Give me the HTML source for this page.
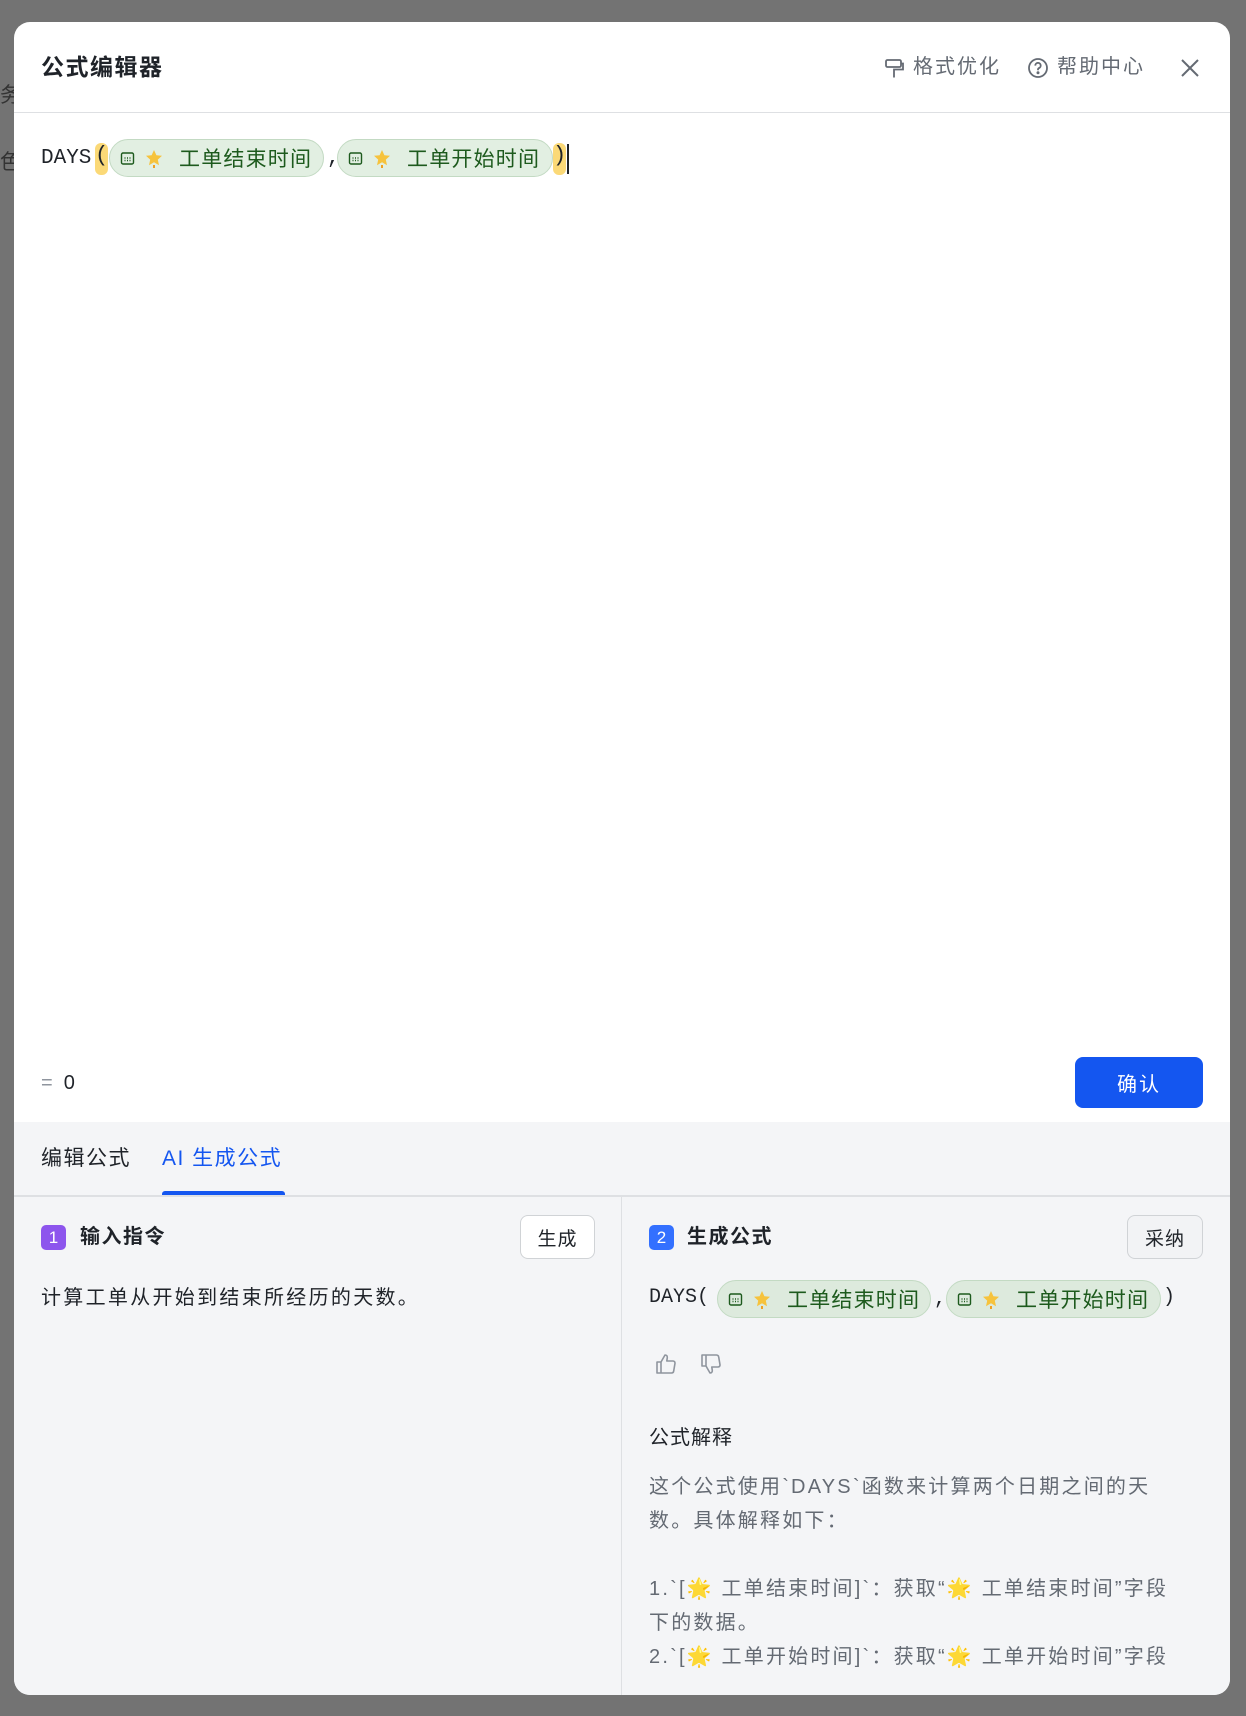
<!DOCTYPE html>
<html><head><meta charset="utf-8"><style>
*{box-sizing:border-box;margin:0;padding:0}
body{width:1246px;height:1716px;background:#737373;position:relative;overflow:hidden;font-family:"Liberation Sans","Noto Sans CJK SC",sans-serif;color:#1f2329}
.abs{position:absolute}
.modal{left:14px;top:22px;width:1216px;height:1673px;background:#fff;border-radius:16px;overflow:hidden}
.t{white-space:nowrap;line-height:1}
.chip{position:absolute;height:38px;border-radius:19px;background:#e2efe2;border:1px solid #c3dac3;color:#1d5a1d;font-size:21px;letter-spacing:1.2px;display:flex;align-items:center;white-space:nowrap}
.mono{font-family:"Liberation Mono","DejaVu Sans Mono",monospace}
.btn{position:absolute;border:1px solid #d0d3d6;border-radius:8px;font-size:19px;display:flex;align-items:center;justify-content:center;letter-spacing:1px}
.badge{position:absolute;width:25px;height:25px;border-radius:5px;color:#fff;font-size:17px;display:flex;align-items:center;justify-content:center}
.p{color:#646a73;font-size:20px;letter-spacing:2.2px;line-height:34px;white-space:nowrap}
</style></head><body>
<div class="abs t" style="left:0;top:85px;font-size:21px;color:#333">务</div>
<div class="abs t" style="left:0;top:152px;font-size:21px;color:#333">色</div>
<div class="abs modal">
  <div class="abs t" style="left:27px;top:34px;font-size:23px;font-weight:bold;letter-spacing:1.5px">公式编辑器</div>
  <svg class="abs" style="left:870px;top:35px" width="22" height="24" viewBox="0 0 22 24" fill="none" stroke="#646a73" stroke-width="1.8"><rect x="2" y="3" width="15" height="7" rx="1.5"/><path d="M17 6.5h2v6H10v8"/></svg>
  <div class="abs t" style="left:899px;top:35px;font-size:20px;color:#646a73;letter-spacing:2px">格式优化</div>
  <svg class="abs" style="left:1013px;top:35px" width="22" height="22" viewBox="0 0 22 22" fill="none" stroke="#646a73" stroke-width="1.8"><circle cx="11" cy="11" r="9"/><path d="M8.3 8.6a2.7 2.7 0 1 1 3.6 2.5c-.6.3-.9.8-.9 1.4v.7"/><circle cx="11" cy="15.8" r=".6" fill="#646a73"/></svg>
  <div class="abs t" style="left:1043px;top:35px;font-size:20px;color:#646a73;letter-spacing:2px">帮助中心</div>
  <svg class="abs" style="left:1166px;top:36px" width="20" height="20" viewBox="0 0 20 20" stroke="#646a73" stroke-width="2"><path d="M2 2l16 16M18 2L2 18"/></svg>
  <div class="abs" style="left:0;top:90px;width:1216px;height:1px;background:#dee0e3"></div>

  <div class="abs t mono" style="left:27px;top:125px;font-size:21px;line-height:24px">DAYS</div>
  <div class="abs" style="left:81px;top:121px;width:13px;height:32px;background:#fbd977;border-radius:6px"></div>
  <div class="abs t mono" style="left:81px;top:123px;font-size:22px">(</div>
  <div class="chip" style="left:95px;top:117px;width:215px"><svg style="margin-left:10px" width="15" height="15" viewBox="0 0 15 15" fill="none" stroke="#1d5a1d" stroke-width="1.4"><rect x="1.5" y="2" width="12" height="11" rx="1.5"/><path d="M4.5 7h1M7 7h1M9.5 7h1M4.5 9.5h1M7 9.5h1M9.5 9.5h1"/></svg><svg style="margin-left:8px" width="22" height="22" viewBox="0 0 22 22"><path d="M11 3l2.4 5.2 5.6.6-4.2 3.8 1.2 5.6L11 15.3 6 18.2l1.2-5.6L3 8.8l5.6-.6z" fill="#f6c33d"/><path d="M11 18v3" stroke="#f0a020" stroke-width="2"/></svg><span style="margin-left:14px">工单结束时间</span></div>
  <div class="abs t mono" style="left:313px;top:126px;font-size:21px">,</div>
  <div class="chip" style="left:323px;top:117px;width:216px"><svg style="margin-left:10px" width="15" height="15" viewBox="0 0 15 15" fill="none" stroke="#1d5a1d" stroke-width="1.4"><rect x="1.5" y="2" width="12" height="11" rx="1.5"/><path d="M4.5 7h1M7 7h1M9.5 7h1M4.5 9.5h1M7 9.5h1M9.5 9.5h1"/></svg><svg style="margin-left:8px" width="22" height="22" viewBox="0 0 22 22"><path d="M11 3l2.4 5.2 5.6.6-4.2 3.8 1.2 5.6L11 15.3 6 18.2l1.2-5.6L3 8.8l5.6-.6z" fill="#f6c33d"/><path d="M11 18v3" stroke="#f0a020" stroke-width="2"/></svg><span style="margin-left:14px">工单开始时间</span></div>
  <div class="abs" style="left:539px;top:121px;width:13px;height:32px;background:#fbd977;border-radius:6px"></div>
  <div class="abs t mono" style="left:539px;top:123px;font-size:22px">)</div>
  <div class="abs" style="left:553px;top:122px;width:2px;height:30px;background:#1f2329"></div>

  <div class="abs t" style="left:27px;top:1051px;font-size:20px"><span style="color:#8f959e">=</span>&nbsp; 0</div>
  <div class="abs" style="left:1061px;top:1035px;width:128px;height:51px;background:#1456f0;border-radius:8px;color:#fff;font-size:20px;display:flex;align-items:center;justify-content:center;letter-spacing:2px">确认</div>

  <div class="abs" style="left:0;top:1100px;width:1216px;height:600px;background:#f4f5f7">
    <div class="abs t" style="left:27px;top:26px;font-size:21px;letter-spacing:1.5px;color:#1f2329">编辑公式</div>
    <div class="abs t" style="left:148px;top:26px;font-size:21px;letter-spacing:1.5px;color:#1456f0">AI 生成公式</div>
    <div class="abs" style="left:148px;top:69px;width:123px;height:5px;background:#1456f0;border-radius:3px 3px 0 0"></div>
    <div class="abs" style="left:0;top:73px;width:1216px;height:2px;background:#dee0e3"></div>
    <div class="abs" style="left:607px;top:75px;width:1px;height:530px;background:#dee0e3"></div>

    <div class="badge" style="left:27px;top:103px;background:#8d55ed">1</div>
    <div class="abs t" style="left:66px;top:105px;font-size:20px;font-weight:bold;letter-spacing:1.5px">输入指令</div>
    <div class="btn" style="left:506px;top:93px;width:75px;height:44px;background:#fff">生成</div>
    <div class="abs t" style="left:27px;top:166px;font-size:20px;letter-spacing:2.3px">计算工单从开始到结束所经历的天数。</div>

    <div class="badge" style="left:635px;top:103px;background:#3370ff">2</div>
    <div class="abs t" style="left:673px;top:105px;font-size:20px;font-weight:bold;letter-spacing:1.5px">生成公式</div>
    <div class="btn" style="left:1113px;top:93px;width:76px;height:44px;background:#f2f3f5">采纳</div>

    <div class="abs t mono" style="left:635px;top:166px;font-size:20px">DAYS(</div>
    <div class="chip" style="left:703px;top:158px;width:214px;background:#ddeadd"><svg style="margin-left:10px" width="15" height="15" viewBox="0 0 15 15" fill="none" stroke="#1d5a1d" stroke-width="1.4"><rect x="1.5" y="2" width="12" height="11" rx="1.5"/><path d="M4.5 7h1M7 7h1M9.5 7h1M4.5 9.5h1M7 9.5h1M9.5 9.5h1"/></svg><svg style="margin-left:8px" width="22" height="22" viewBox="0 0 22 22"><path d="M11 3l2.4 5.2 5.6.6-4.2 3.8 1.2 5.6L11 15.3 6 18.2l1.2-5.6L3 8.8l5.6-.6z" fill="#f6c33d"/><path d="M11 18v3" stroke="#f0a020" stroke-width="2"/></svg><span style="margin-left:14px">工单结束时间</span></div>
    <div class="abs t mono" style="left:920px;top:168px;font-size:20px">,</div>
    <div class="chip" style="left:932px;top:158px;width:215px;background:#ddeadd"><svg style="margin-left:10px" width="15" height="15" viewBox="0 0 15 15" fill="none" stroke="#1d5a1d" stroke-width="1.4"><rect x="1.5" y="2" width="12" height="11" rx="1.5"/><path d="M4.5 7h1M7 7h1M9.5 7h1M4.5 9.5h1M7 9.5h1M9.5 9.5h1"/></svg><svg style="margin-left:8px" width="22" height="22" viewBox="0 0 22 22"><path d="M11 3l2.4 5.2 5.6.6-4.2 3.8 1.2 5.6L11 15.3 6 18.2l1.2-5.6L3 8.8l5.6-.6z" fill="#f6c33d"/><path d="M11 18v3" stroke="#f0a020" stroke-width="2"/></svg><span style="margin-left:14px">工单开始时间</span></div>
    <div class="abs t mono" style="left:1149px;top:166px;font-size:20px">)</div>

    <svg class="abs" style="left:641px;top:231px" width="22" height="22" viewBox="0 0 22 22" fill="none" stroke="#8f959e" stroke-width="1.6" stroke-linejoin="round"><path d="M2 9h4v11H2zM6 9l4-7c1.5 0 2.5 1 2.3 2.5L11.8 8H18a2 2 0 0 1 2 2.3l-1.3 7.7a2.3 2.3 0 0 1-2.2 2H6"/></svg>
    <svg class="abs" style="left:686px;top:231px" width="22" height="22" viewBox="0 0 22 22" fill="none" stroke="#8f959e" stroke-width="1.6" stroke-linejoin="round"><path d="M2 2h4v11H2zM6 13l4 7c1.5 0 2.5-1 2.3-2.5L11.8 14H18a2 2 0 0 0 2-2.3L18.7 4a2.3 2.3 0 0 0-2.2-2H6"/></svg>

    <div class="abs t" style="left:635px;top:306px;font-size:20px;letter-spacing:1px">公式解释</div>
    <div class="abs" style="left:635px;top:348px;width:560px;height:198px;overflow:hidden">
      <div class="p">这个公式使用`DAYS`函数来计算两个日期之间的天</div>
      <div class="p">数。具体解释如下：</div>
      <div class="p">&nbsp;</div>
      <div class="p">1.`[🌟 工单结束时间]`：获取“🌟 工单结束时间”字段</div>
      <div class="p">下的数据。</div>
      <div class="p">2.`[🌟 工单开始时间]`：获取“🌟 工单开始时间”字段</div>
    </div>
  </div>
</div>
</body></html>
